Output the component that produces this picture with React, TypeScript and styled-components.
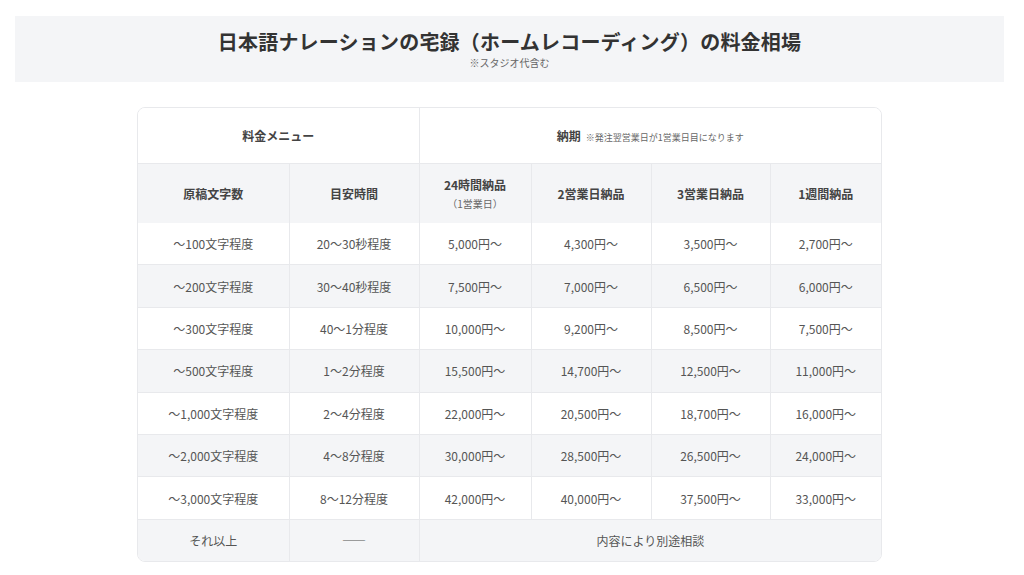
import styled, { createGlobalStyle } from "styled-components";

const GlobalStyle = createGlobalStyle`
  html, body {
    margin: 0;
    padding: 0;
    background: #ffffff;
    font-family: "Noto Sans CJK JP", "Noto Sans", sans-serif;
    color: #555555;
  }
`;

const Page = styled.div`
  padding: 16px 20px 0 15px;
`;

const Banner = styled.header`
  background: #f4f5f7;
  height: 66px;
  display: flex;
  flex-direction: column;
  align-items: center;
  justify-content: center;
`;

const Title = styled.h2`
  margin: -2px 0 0;
  font-size: 20px;
  line-height: 28px;
  font-weight: 700;
  color: #333333;
  letter-spacing: 0.2px;
`;

const Note = styled.p`
  margin: 1px 0 0;
  font-size: 10px;
  line-height: 12px;
  color: #666666;
`;

const TableWrap = styled.div`
  width: 743px;
  margin: 25px auto 0;
  border: 1px solid #e8e9ec;
  border-radius: 8px;
  overflow: hidden;
`;

const Table = styled.table`
  width: 100%;
  table-layout: fixed;
  border-collapse: collapse;
  font-size: 12px;
`;

const Row = styled.tr<{ $shade?: boolean }>`
  background: ${(p) => (p.$shade ? "#f4f5f7" : "#ffffff")};
  border-top: 1px solid #e8e9ec;
  &:first-child {
    border-top: none;
  }
`;

const Th = styled.th<{ $h?: number }>`
  height: ${(p) => p.$h ?? 59}px;
  padding: 0;
  font-weight: 700;
  color: #444444;
  text-align: center;
  border-left: 1px solid #e8e9ec;
  &:first-child {
    border-left: none;
  }
`;

const Small = styled.span`
  font-size: 9px;
  font-weight: 400;
  color: #666666;
  margin-left: 5px;
`;

const Sub = styled.div`
  font-size: 10px;
  font-weight: 400;
  color: #666666;
  margin-top: 3px;
`;

const Td = styled.td`
  height: 41.4px;
  padding: 0;
  text-align: center;
  color: #555555;
  border-left: 1px solid #e8e9ec;
  &:first-child {
    border-left: none;
  }
`;

const widths = [151, 130, 112, 120, 119, 111];

const rows: string[][] = [
  ["〜100文字程度", "20〜30秒程度", "5,000円〜", "4,300円〜", "3,500円〜", "2,700円〜"],
  ["〜200文字程度", "30〜40秒程度", "7,500円〜", "7,000円〜", "6,500円〜", "6,000円〜"],
  ["〜300文字程度", "40〜1分程度", "10,000円〜", "9,200円〜", "8,500円〜", "7,500円〜"],
  ["〜500文字程度", "1〜2分程度", "15,500円〜", "14,700円〜", "12,500円〜", "11,000円〜"],
  ["〜1,000文字程度", "2〜4分程度", "22,000円〜", "20,500円〜", "18,700円〜", "16,000円〜"],
  ["〜2,000文字程度", "4〜8分程度", "30,000円〜", "28,500円〜", "26,500円〜", "24,000円〜"],
  ["〜3,000文字程度", "8〜12分程度", "42,000円〜", "40,000円〜", "37,500円〜", "33,000円〜"],
];

export default function App() {
  return (
    <Page>
      <GlobalStyle />
      <Banner>
        <Title>日本語ナレーションの宅録（ホームレコーディング）の料金相場</Title>
        <Note>※スタジオ代含む</Note>
      </Banner>
      <TableWrap>
        <Table>
          <colgroup>
            {widths.map((w, i) => (
              <col key={i} style={{ width: w }} />
            ))}
          </colgroup>
          <thead>
            <Row>
              <Th colSpan={2} $h={55}>料金メニュー</Th>
              <Th colSpan={4} $h={55}>
                納期<Small>※発注翌営業日が1営業日目になります</Small>
              </Th>
            </Row>
            <Row $shade>
              <Th>原稿文字数</Th>
              <Th>目安時間</Th>
              <Th>
                24時間納品
                <Sub>（1営業日）</Sub>
              </Th>
              <Th>2営業日納品</Th>
              <Th>3営業日納品</Th>
              <Th>1週間納品</Th>
            </Row>
          </thead>
          <tbody>
            {rows.map((r, i) => (
              <Row key={i} $shade={i % 2 === 1}>
                {r.map((c, j) => (
                  <Td key={j}>{c}</Td>
                ))}
              </Row>
            ))}
            <Row $shade>
              <Td>それ以上</Td>
              <Td>――</Td>
              <Td colSpan={4}>内容により別途相談</Td>
            </Row>
          </tbody>
        </Table>
      </TableWrap>
    </Page>
  );
}
